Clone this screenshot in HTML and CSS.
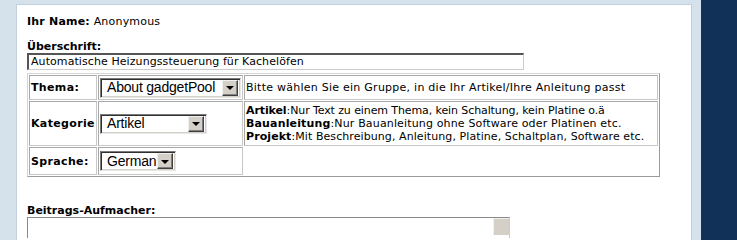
FILE: index.html
```html
<!DOCTYPE html>
<html>
<head>
<meta charset="utf-8">
<link rel="stylesheet" href="styles.css">
</head>
<body>
<div class="page">
  <div class="gutter"></div>
  <div class="panel">
    <div class="line"><b>Ihr Name:</b> Anonymous</div>
    <div class="label-head"><b>Überschrift:</b></div>
    <div class="textinput">Automatische Heizungssteuerung für Kachelöfen</div>
    <div class="formtable">
      <div class="cell label">Thema:</div>
      <div class="cell sel"><div class="select w-thema"><span class="val">About gadgetPool</span><span class="btn"><span class="tri"></span></span></div></div>
      <div class="cell desc wide">Bitte wählen Sie ein Gruppe, in die Ihr Artikel/Ihre Anleitung passt</div>

      <div class="cell label">Kategorie</div>
      <div class="cell sel"><div class="select w-kat"><span class="val">Artikel</span><span class="btn"><span class="tri"></span></span></div></div>
      <div class="cell desc multi">
        <div class="l1"><b>Artikel</b>:Nur Text zu einem Thema, kein Schaltung, kein Platine o.ä</div>
        <div class="l2"><b>Bauanleitung</b>:Nur Bauanleitung ohne Software oder Platinen etc.</div>
        <div class="l3"><b>Projekt</b>:Mit Beschreibung, Anleitung, Platine, Schaltplan, Software etc.</div>
      </div>

      <div class="cell label">Sprache:</div>
      <div class="cell sel"><div class="select w-lang"><span class="val">German</span><span class="btn"><span class="tri"></span></span></div></div>
    </div>
    <div class="label-head second"><b>Beitrags-Aufmacher:</b></div>
    <div class="textarea"><span class="scroll"></span></div>
  </div>
  <div class="gap"></div>
  <div class="navy"></div>
</div>
</body>
</html>
```

FILE: styles.css
```css
html, body {
  margin: 0;
  padding: 0;
  overflow: hidden;
}
body {
  background: #d5e1eb;
  font-family: "DejaVu Sans", Verdana, sans-serif;
  font-size: 11px;
  line-height: 13px;
  color: #000;
}
.page {
  display: flex;
  min-height: 100vh;
}
.gutter {
  width: 16px;
  flex: none;
}
.panel {
  width: 654px;
  flex: none;
  margin-top: 4px;
  background: #fff;
  border: 1px solid #c2d0dc;
  border-bottom: none;
  padding: 10px 10px 0 10px;
  overflow: hidden;
}
.gap {
  width: 9px;
  flex: none;
}
.navy {
  flex: 1;
  background: #123158;
}
.line {
  height: 13px;
  letter-spacing: 0.2px;
}
.label-head {
  margin-top: 12px;
  height: 13px;
}
.label-head.second {
  margin-top: 27px;
}
.textinput {
  width: 490px;
  height: 14px;
  padding: 0 2px;
  border-top: 2px solid #555;
  border-left: 2px solid #555;
  border-right: 1px solid #ccc;
  border-bottom: 1px solid #ccc;
  line-height: 14px;
  white-space: nowrap;
  letter-spacing: 0.08px;
}
.formtable {
  margin-top: 3px;
  width: 629px;
  display: grid;
  grid-template-columns: 68px 145px 414px;
  grid-template-rows: 25px 45px 28px;
  gap: 1px;
  padding: 1px;
  border: 1px solid;
  border-color: #d4d4d4 #9a9a9a #9a9a9a #d4d4d4;
}
.cell {
  box-sizing: border-box;
  border: 1px solid;
  border-color: #a8a8a8 #c8c8c8 #c8c8c8 #a8a8a8;
  display: flex;
  align-items: center;
}
.cell.label {
  font-weight: bold;
  padding-left: 1px;
  letter-spacing: 0.35px;
}
.cell.sel {
  padding-left: 1px;
}
.cell.desc {
  padding-left: 1px;
  white-space: nowrap;
}
.cell.desc.wide {
  letter-spacing: 0.25px;
}
.cell.multi {
  flex-direction: column;
  align-items: flex-start;
  justify-content: center;
}
.l1 { letter-spacing: -0.1px; }
.l2 { letter-spacing: 0.15px; }
.l3 { letter-spacing: 0.08px; }
.select {
  box-sizing: border-box;
  height: 20px;
  display: flex;
  align-items: center;
  justify-content: space-between;
  background: #fff;
  border: 1px solid;
  border-color: #7a7a7a #e8e8e8 #e8e8e8 #7a7a7a;
  box-shadow: inset 1px 1px 0 #303030, inset -1px -1px 0 #d4d0c8;
  padding: 2px;
  font-family: "Liberation Sans", Arial, sans-serif;
  font-size: 14px;
}
.w-thema { width: 141px; }
.w-kat { width: 107px; }
.w-lang { width: 76px; }
.val {
  padding-left: 4px;
  white-space: nowrap;
  letter-spacing: -0.2px;
}
.btn {
  box-sizing: border-box;
  width: 16px;
  height: 16px;
  background: #d4d0c8;
  border: 1px solid;
  border-color: #f0f0f0 #404040 #404040 #f0f0f0;
  box-shadow: inset -1px -1px 0 #808080;
  display: flex;
  align-items: center;
  justify-content: center;
}
.tri {
  width: 0;
  height: 0;
  border-left: 4px solid transparent;
  border-right: 4px solid transparent;
  border-top: 4px solid #000;
  margin-top: 1px;
}
.textarea {
  width: 481px;
  height: 20px;
  border-top: 1px solid #8a8a8a;
  border-left: 1px solid #8a8a8a;
  border-right: 1px solid #ccc;
  display: flex;
  justify-content: flex-end;
}
.scroll {
  width: 15px;
  height: 16px;
  background: #d4d0c8;
  border-left: 1px solid #f0f0f0;
  border-top: 1px solid #f0f0f0;
}
```
